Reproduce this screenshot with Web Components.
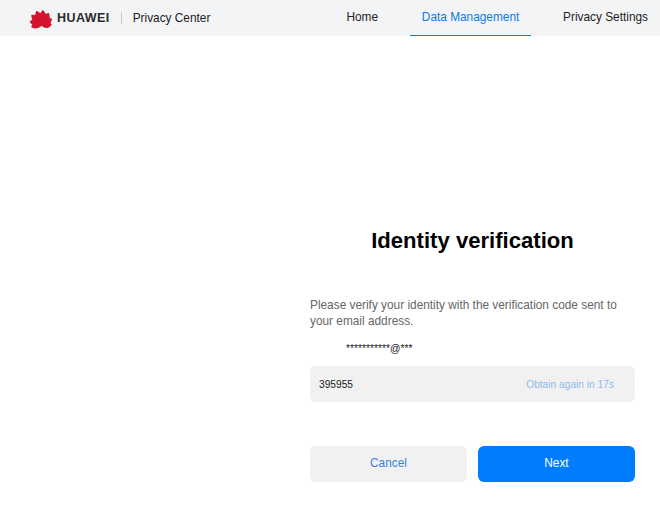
<!DOCTYPE html>
<html lang="en">
<head>
<meta charset="utf-8">
<title>Privacy Center</title>
<style>
  html, body { margin: 0; padding: 0; background: #fff; }
  body { font-family: "Liberation Sans", Arial, sans-serif; width: 660px; height: 506px; overflow: hidden; }
</style>
</head>
<body>
<privacy-header></privacy-header>
<identity-form></identity-form>

<script>
class PrivacyHeader extends HTMLElement {
    constructor() {
        super();
        this._shadowRoot = this.attachShadow({mode: 'open'});
    }

    connectedCallback() {
        this.render();
    }

    render() {
        // eight petals fanned out from the bottom centre, longest on top
        const petals = [[12, 1], [36, .94], [62, .8], [88, .66]]
            .map(([a, s]) => [a, -a].map(r =>
                `<path transform="rotate(${r} 11.5 16.8) translate(11.5 16.8) scale(${s}) translate(-11.5 -16.8)" d="M11.5 16.8C8.6 14 7.1 10.6 7.2 7.2 7.3 4.8 8.3 2.6 9.6 1 12.8 3 14.9 5.9 15 9 15.1 11.8 13.6 14.8 11.5 16.8Z"/>`
            ).join(''))
            .join('');
        this._shadowRoot.innerHTML = `
            <style>
                * { margin: 0; padding: 0; box-sizing: border-box; }
                :host {
                    display: flex;
                    justify-content: space-between;
                    height: 36px;
                    padding: 0 12px 0 30px;
                    background: #f3f4f6;
                    font-size: 11.85px;
                    color: #222;
                }
                .brand { display: flex; align-items: center; }
                svg { width: 23px; height: 18px; fill: #d3132f; overflow: visible; }
                .word {
                    margin-left: 4px;
                    font-size: 12.5px;
                    font-weight: bold;
                    letter-spacing: .45px;
                    color: #2b2b2b;
                }
                .sep { width: 1px; height: 12px; background: #c9cacc; margin: 0 11px; }
                .nav { display: flex; }
                .nav a {
                    display: flex;
                    align-items: center;
                    color: #222;
                    border-bottom: 1px solid transparent;
                    padding-bottom: 1px;
                }
                .nav a.home { margin-right: 32px; }
                .nav a.active {
                    width: 121px;
                    justify-content: center;
                    color: #0a7bea;
                    border-bottom-color: #0f7fc9;
                    margin-right: 32px;
                }
            </style>
            <div class="brand">
                <svg viewBox="0 0 23 18" aria-hidden="true">${petals}</svg>
                <span class="word">HUAWEI</span>
                <span class="sep"></span>
                <span>Privacy Center</span>
            </div>
            <nav class="nav">
                <a class="home">Home</a>
                <a class="active">Data Management</a>
                <a>Privacy Settings</a>
            </nav>
        `;
    }
}

class IdentityForm extends HTMLElement {
    constructor() {
        super();
        this._shadowRoot = this.attachShadow({mode: 'open'});
    }

    connectedCallback() {
        this.render();
    }

    render() {
        this._shadowRoot.innerHTML = `
            <style>
                * { margin: 0; padding: 0; box-sizing: border-box; }
                :host {
                    display: block;
                    width: 325px;
                    margin-left: 310px;
                    padding-top: 192px;
                    font-size: 11.85px;
                }
                h1 {
                    font-size: 22.1px;
                    line-height: 26px;
                    font-weight: bold;
                    text-align: center;
                    color: #000;
                }
                .note {
                    margin-top: 43px;
                    line-height: 16px;
                    color: #666;
                }
                .mail {
                    margin: 13px 0 0 36px;
                    font-size: 10.3px;
                    line-height: 14px;
                    color: #222;
                }
                .code {
                    display: flex;
                    justify-content: space-between;
                    align-items: center;
                    height: 36px;
                    margin-top: 10px;
                    padding: 0 21px 0 9px;
                    border-radius: 6px;
                    background: #f1f1f1;
                    font-size: 10.2px;
                    color: #222;
                }
                .code span { color: #8dbcea; }
                .actions {
                    display: grid;
                    grid-template-columns: 157px 157px;
                    justify-content: space-between;
                    margin-top: 44px;
                }
                .btn {
                    display: flex;
                    align-items: center;
                    justify-content: center;
                    height: 36px;
                    border-radius: 6px;
                    padding-bottom: 2px;
                }
                .cancel { background: #f1f1f1; color: #3b7fe0; }
                .next { background: #007dff; color: #fff; }
            </style>
            <h1>Identity verification</h1>
            <p class="note">Please verify your identity with the verification code sent to your email address.</p>
            <p class="mail">***********@***</p>
            <div class="code">395955<span>Obtain again in 17s</span></div>
            <div class="actions">
                <div class="btn cancel">Cancel</div>
                <div class="btn next">Next</div>
            </div>
        `;
    }
}

customElements.define('privacy-header', PrivacyHeader);
customElements.define('identity-form', IdentityForm);
</script>
</body>
</html>
